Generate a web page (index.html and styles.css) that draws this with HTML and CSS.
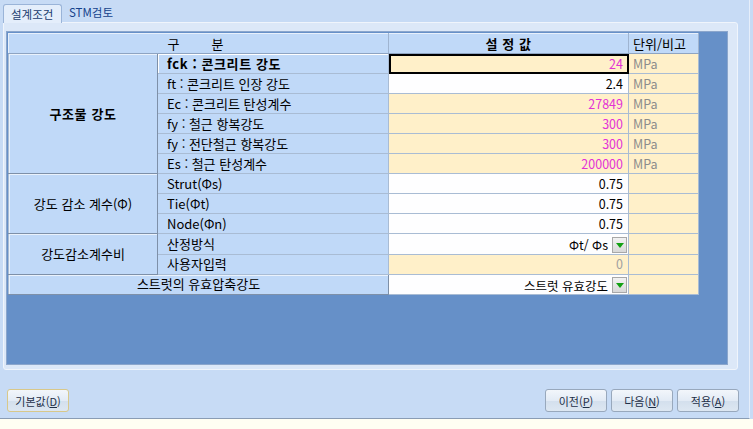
FILE: index.html
```html
<!DOCTYPE html>
<html lang="ko">
<head>
  <meta charset="UTF-8">
  <title>설계조건</title>
  <link rel="stylesheet" href="styles.css">
</head>
<body>
<div class="window">
  <div class="tabs">
    <div class="tab active">설계조건</div>
    <div class="tab">STM검토</div>
  </div>
  <div class="panel">
    <div class="grid">
      <table class="sheet">
        <colgroup>
          <col class="c-group">
          <col class="c-label">
          <col class="c-value">
          <col class="c-unit">
        </colgroup>
        <tr class="head">
          <th colspan="2">구<span class="gap"></span>분</th>
          <th class="bold">설 정 값</th>
          <th>단위/비고</th>
        </tr>
        <tr>
          <td class="group bold" rowspan="6">구조물 강도</td>
          <td class="label bold current">fck : 콘크리트 강도</td>
          <td class="value edit pink selected">24</td>
          <td class="unit">MPa</td>
        </tr>
        <tr>
          <td class="label">ft : 콘크리트 인장 강도</td>
          <td class="value">2.4</td>
          <td class="unit">MPa</td>
        </tr>
        <tr>
          <td class="label">Ec : 콘크리트 탄성계수</td>
          <td class="value edit pink">27849</td>
          <td class="unit">MPa</td>
        </tr>
        <tr>
          <td class="label">fy : 철근 항복강도</td>
          <td class="value edit pink">300</td>
          <td class="unit">MPa</td>
        </tr>
        <tr>
          <td class="label">fy : 전단철근 항복강도</td>
          <td class="value edit pink">300</td>
          <td class="unit">MPa</td>
        </tr>
        <tr>
          <td class="label">Es : 철근 탄성계수</td>
          <td class="value edit pink">200000</td>
          <td class="unit">MPa</td>
        </tr>
        <tr>
          <td class="group" rowspan="3">강도 감소 계수(Φ)</td>
          <td class="label">Strut(Φs)</td>
          <td class="value">0.75</td>
          <td class="unit"></td>
        </tr>
        <tr>
          <td class="label">Tie(Φt)</td>
          <td class="value">0.75</td>
          <td class="unit"></td>
        </tr>
        <tr>
          <td class="label">Node(Φn)</td>
          <td class="value">0.75</td>
          <td class="unit"></td>
        </tr>
        <tr>
          <td class="group" rowspan="2">강도감소계수비</td>
          <td class="label">산정방식</td>
          <td class="value combo"><span>Φt/ Φs</span><i class="drop"></i></td>
          <td class="unit"></td>
        </tr>
        <tr>
          <td class="label">사용자입력</td>
          <td class="value edit muted">0</td>
          <td class="unit"></td>
        </tr>
        <tr>
          <td class="group" colspan="2">스트럿의 유효압축강도</td>
          <td class="value combo"><span>스트럿 유효강도</span><i class="drop"></i></td>
          <td class="unit"></td>
        </tr>
      </table>
    </div>
  </div>
  <div class="footer">
    <button class="btn default">기본값(<u>D</u>)</button>
    <div class="right">
      <button class="btn">이전(<u>P</u>)</button>
      <button class="btn">다음(<u>N</u>)</button>
      <button class="btn">적용(<u>A</u>)</button>
    </div>
  </div>
</div>
<div class="status"></div>
</body>
</html>
```

FILE: styles.css
```css
html, body {
  margin: 0;
  height: 100%;
}

body {
  background: #c7dbf5;
  font-family: "Noto Sans CJK KR", "DejaVu Sans", sans-serif;
  font-size: 13px;
  color: #000;
  overflow: hidden;
}

.window {
  width: 750px;
  height: 419px;
  border-right: 1px solid #e6eefa;
  border-bottom: 1px solid #8a9cb4;
  box-sizing: border-box;
}

/* 탭 */
.tabs {
  display: flex;
  height: 22px;
  padding: 3px 0 0 3px;
  box-sizing: border-box;
}
.tab {
  padding: 0 6px 0 7px;
  line-height: 18px;
  font-size: 11.5px;
  color: #15428b;
}
.tab.active {
  background: #e4eefb;
  border: 1px solid #9ab4d8;
  border-bottom: none;
  border-radius: 3px 3px 0 0;
  color: #1a3c6e;
  position: relative;
  top: 1px;
  width: 44px;
}

/* 패널 */
.panel {
  margin: 0 11px 0 3px;
  height: 348px;
  box-sizing: border-box;
  background: #dce8f8;
  border: 1px solid #f0f5fc;
  border-radius: 0 3px 3px 3px;
  padding: 8px 9px 4px 2px;
}

.grid {
  height: 334px;
  box-sizing: border-box;
  background: #6690c8;
  border: 1px solid #8ba6cc;
  padding: 1px 0 0 1px;
}

.sheet {
  border-collapse: collapse;
  table-layout: fixed;
  width: 690px;
}
.c-group { width: 149px; }
.c-label { width: 231px; }
.c-value { width: 240px; }
.c-unit { width: 70px; }

.sheet th, .sheet td {
  height: 19px;
  padding: 0;
  border: 1px solid #a9bcd4;
  white-space: nowrap;
  font-weight: normal;
  line-height: 18px;
}

.sheet .head th {
  background: #c0d9f8;
  text-align: center;
  border-color: #e8f0fb #9fb4d0 #8ea4c2 #e8f0fb;
}
.sheet .head th:first-child {
  padding-right: 6px;
}
.sheet .head th:last-child {
  text-align: left;
  padding-left: 4px;
}
.gap {
  display: inline-block;
  width: 32px;
}

.bold {
  font-weight: bold !important;
  letter-spacing: 0.6px;
}

.group {
  background: #c0d9f8;
  text-align: center;
  border-right: 1px solid #7e90a8 !important;
  border-bottom: 1px solid #7e90a8 !important;
  box-shadow: inset 1px 1px 0 #eaf2fc;
}

.label {
  background: #c0d9f8;
  padding-left: 9px !important;
  border-color: #8fa3bf #a0b2c8 #eaf1fb #eaf1fb;
}
.label.current {
  box-shadow: inset 1px 1px 0 #ffffff;
}

.value {
  background: #fefeff;
  text-align: right;
  padding-right: 5px !important;
  font-size: 12.5px;
}
.value.edit {
  background: #fff0c9;
}
.value.selected {
  outline: 2px solid #000;
  outline-offset: -2px;
  letter-spacing: 0;
  font-weight: normal !important;
}
.pink { color: #e232d6; }
.muted { color: #a0a0a0; }

.unit {
  background: #fff0c9;
  color: #8c8c8c;
  padding-left: 4px !important;
  font-size: 12.5px;
}

.combo {
  padding-right: 1px !important;
}
.combo span {
  vertical-align: middle;
}
.drop {
  display: inline-block;
  vertical-align: middle;
  width: 15px;
  height: 16px;
  margin-left: 4px;
  box-sizing: border-box;
  border: 1px solid #a8a8a8;
  background: linear-gradient(#f2f2f2, #d8d8d8);
  position: relative;
}
.drop::after {
  content: "";
  position: absolute;
  left: 3px;
  top: 5px;
  border-left: 4px solid transparent;
  border-right: 4px solid transparent;
  border-top: 5px solid #12a012;
}

/* 하단 버튼 */
.footer {
  display: flex;
  justify-content: space-between;
  padding: 19px 10px 0 7px;
}
.right {
  display: flex;
  gap: 4px;
}
.btn {
  width: 62px;
  height: 23px;
  padding: 0;
  font-family: inherit;
  font-size: 11px;
  color: #1e2f48;
  border: 1px solid #98a8bc;
  border-radius: 3px;
  background: linear-gradient(#f2f6fb 0%, #e3ebf5 50%, #d3dfed 51%, #dde7f2 100%);
}
.btn.default {
  border-color: #d8c88a;
}

.status {
  height: 10px;
  background: #fffef2;
}
```
